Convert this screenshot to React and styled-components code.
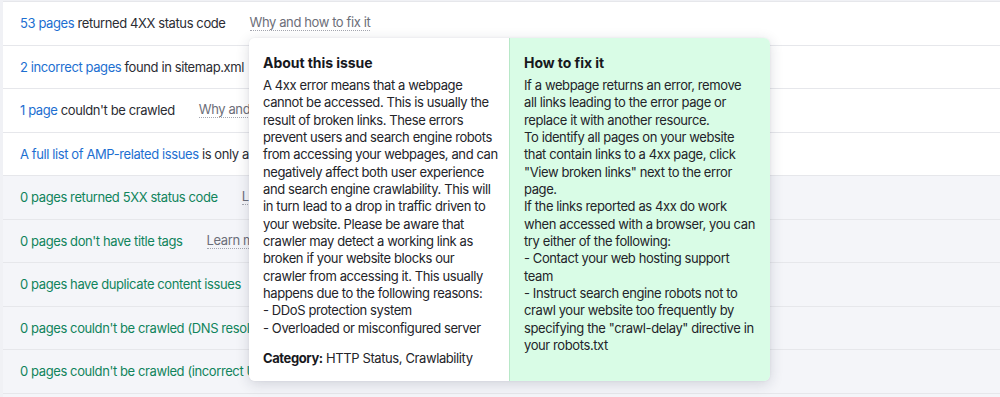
import React from "react";
import styled, { createGlobalStyle } from "styled-components";

const Global = createGlobalStyle`
  html, body { margin: 0; padding: 0; }
  body {
    background: #f0f1f5;
    font-family: Inter, "Noto Sans", sans-serif;
    font-size: 13px;
    letter-spacing: -0.4px;
    color: #333;
    overflow: hidden;
  }
`;

const Page = styled.div`
  position: relative;
  width: 1000px;
  height: 397px;
  padding: 1px 0 0 3px;
  box-sizing: border-box;
  overflow: hidden;
`;

const Table = styled.div`
  display: flex;
  flex-direction: column;
  border-top: 1px solid #e6e7eb;
`;

const Row = styled.div`
  display: flex;
  align-items: center;
  height: 42.5px;
  padding-left: 17px;
  background: ${(p) => (p.$muted ? "#f4f5f9" : "#ffffff")};
  border-bottom: 1px solid #e6e7eb;
  white-space: nowrap;
  font-size: 13px;
  color: ${(p) => (p.$muted ? "#10845c" : "#2b2c33")};
`;

const Count = styled.span`
  color: #1d6fd1;
`;

const Hint = styled.span`
  margin-left: 24px;
  color: #6c6e79;
  border-bottom: 1px dotted #a4a6b0;
  line-height: 15px;
`;

const Popup = styled.div`
  position: absolute;
  left: 249px;
  top: 38px;
  width: 521px;
  height: 343px;
  display: grid;
  grid-template-columns: 260px 261px;
  border-radius: 6px;
  overflow: hidden;
  box-shadow: 0 3px 14px rgba(30, 35, 60, 0.16), 0 0 2px rgba(30, 35, 60, 0.08);
`;

const Column = styled.div`
  padding: 14px 8px 0 14px;
  background: ${(p) => (p.$fix ? "#d9fce6" : "#ffffff")};
  border-left: ${(p) => (p.$fix ? "1px solid #b8e8c8" : "none")};
  color: #232429;
  font-size: 13px;
  line-height: 17.33px;
`;

const Title = styled.h3`
  margin: 2px 0 5px;
  font-size: 14px;
  line-height: 18px;
  font-weight: 700;
  letter-spacing: -0.05px;
  color: #17181d;
`;

const Text = styled.div`
  margin: 0;
`;

const Line = styled.span`
  display: block;
  white-space: nowrap;
`;

const Category = styled.p`
  margin: 13px 0 0;
  b { font-weight: 700; color: #17181d; }
`;

const rows = [
  { link: "53 pages", rest: " returned 4XX status code", hint: "Why and how to fix it" },
  { link: "2 incorrect pages", rest: " found in sitemap.xml", hint: "Why and how to fix it" },
  { link: "1 page", rest: " couldn't be crawled", hint: "Why and how to fix it" },
  { link: "A full list of AMP-related issues", rest: " is only available with a Business plan" },
  { muted: true, text: "0 pages returned 5XX status code", hint: "Learn more" },
  { muted: true, text: "0 pages don't have title tags", hint: "Learn more" },
  { muted: true, text: "0 pages have duplicate content issues", hint: "Learn more" },
  { muted: true, text: "0 pages couldn't be crawled (DNS resolution issues)", hint: "Learn more" },
  { muted: true, text: "0 pages couldn't be crawled (incorrect URL formats)", hint: "Learn more" },
  { muted: true, text: "0 internal images are broken", hint: "Learn more" },
];

const aboutLines = [
  "A 4xx error means that a webpage",
  "cannot be accessed. This is usually the",
  "result of broken links. These errors",
  "prevent users and search engine robots",
  "from accessing your webpages, and can",
  "negatively affect both user experience",
  "and search engine crawlability. This will",
  "in turn lead to a drop in traffic driven to",
  "your website. Please be aware that",
  "crawler may detect a working link as",
  "broken if your website blocks our",
  "crawler from accessing it. This usually",
  "happens due to the following reasons:",
  "- DDoS protection system",
  "- Overloaded or misconfigured server",
];

const fixLines = [
  "If a webpage returns an error, remove",
  "all links leading to the error page or",
  "replace it with another resource.",
  "To identify all pages on your website",
  "that contain links to a 4xx page, click",
  "\"View broken links\" next to the error",
  "page.",
  "If the links reported as 4xx do work",
  "when accessed with a browser, you can",
  "try either of the following:",
  "- Contact your web hosting support",
  "team",
  "- Instruct search engine robots not to",
  "crawl your website too frequently by",
  "specifying the \"crawl-delay\" directive in",
  "your robots.txt",
];

export default function App() {
  return (
    <Page>
      <Global />
      <Table>
        {rows.map((r, i) => (
          <Row key={i} $muted={r.muted}>
            {r.muted ? (
              <span>{r.text}</span>
            ) : (
              <span>
                <Count>{r.link}</Count>
                {r.rest}
              </span>
            )}
            {r.hint && <Hint>{r.hint}</Hint>}
          </Row>
        ))}
      </Table>
      <Popup>
        <Column>
          <Title>About this issue</Title>
          <Text>
            {aboutLines.map((l, i) => (
              <Line key={i}>{l}</Line>
            ))}
          </Text>
          <Category>
            <b>Category:</b> HTTP Status, Crawlability
          </Category>
        </Column>
        <Column $fix>
          <Title>How to fix it</Title>
          <Text>
            {fixLines.map((l, i) => (
              <Line key={i}>{l}</Line>
            ))}
          </Text>
        </Column>
      </Popup>
    </Page>
  );
}
